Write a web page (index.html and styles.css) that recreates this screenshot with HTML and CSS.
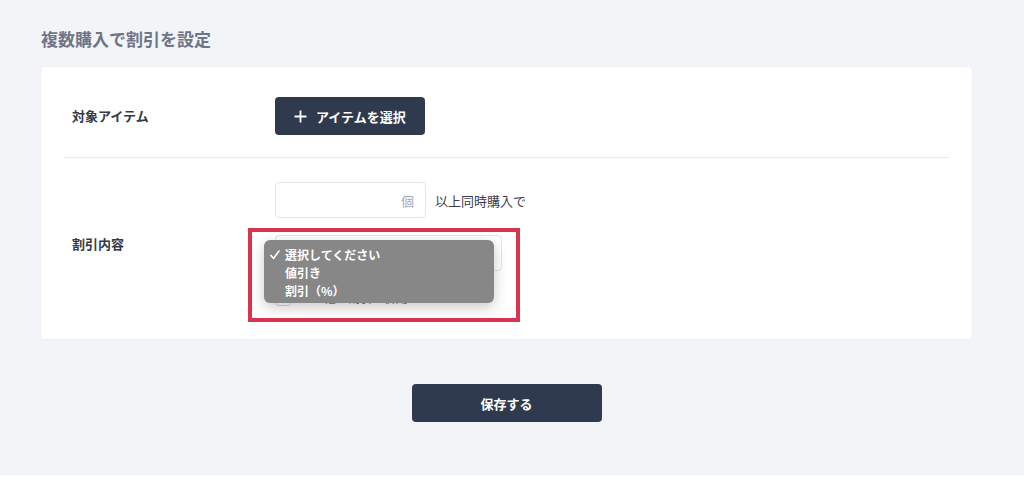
FILE: index.html
```html
<!DOCTYPE html>
<html lang="ja">
<head>
<meta charset="utf-8">
<title>複数購入で割引を設定</title>
<link rel="stylesheet" href="styles.css">
</head>
<body>
<div class="page">
  <h1 class="title">複数購入で割引を設定</h1>
  <div class="card">
    <div class="row row-items">
      <div class="label">対象アイテム</div>
      <div class="controls">
        <button class="btn btn-select" type="button">
          <svg class="plus" width="13" height="13" viewBox="0 0 13 13" aria-hidden="true"><path d="M6.5 0.5v12M0.5 6.5h12" stroke="#fff" stroke-width="1.8" fill="none"/></svg>
          <span>アイテムを選択</span>
        </button>
      </div>
    </div>
    <div class="divider"></div>
    <div class="row row-discount">
      <div class="label">割引内容</div>
      <div class="controls stack">
        <div class="qty-line">
          <div class="input qty"><span class="unit">個</span></div>
          <span class="qty-text">以上同時購入で</span>
        </div>
        <div class="input select"></div>
        <div class="check-line">
          <span class="checkbox"></span>
          <span class="check-text">他の割引と併用</span>
        </div>
      </div>
      <div class="highlight"></div>
      <div class="menu">
        <div class="menu-item checked"><svg class="tick" width="10" height="10" viewBox="0 0 10 10" aria-hidden="true"><path d="M1 5.4l2.6 3L9 1" stroke="#fff" stroke-width="1.6" fill="none" stroke-linecap="round" stroke-linejoin="round"/></svg>選択してください</div>
        <div class="menu-item">値引き</div>
        <div class="menu-item">割引（%）</div>
      </div>
    </div>
  </div>
  <div class="actions">
    <button class="btn btn-save" type="button">保存する</button>
  </div>
</div>
</body>
</html>
```

FILE: styles.css
```css
html, body {
  margin: 0;
  padding: 0;
  background: #ffffff;
}

body {
  font-family: "Noto Sans CJK JP", "Noto Sans", sans-serif;
  color: #333a48;
}

.page {
  background: #f3f4f8;
  min-height: 475px;
  box-sizing: border-box;
  padding: 26px 52px 0 41px;
}

.title {
  margin: 0 0 16px;
  font-size: 17px;
  line-height: 25px;
  font-weight: 700;
  color: #6e7587;
}

.card {
  background: #ffffff;
  border-radius: 4px;
  padding: 0 23px;
  box-shadow: 0 0 2px rgba(30, 40, 70, 0.06);
}

.row {
  display: flex;
  align-items: center;
  padding-left: 8px;
}

.row-items {
  padding-top: 30px;
  padding-bottom: 22px;
}

.label {
  width: 203px;
  flex: none;
  font-size: 13px;
  font-weight: 700;
  color: #333a48;
  line-height: 20px;
}

.controls {
  flex: 1;
}

.btn {
  font-family: "Noto Sans CJK JP", "Noto Sans", sans-serif;
  background: #2f3a4e;
  color: #ffffff;
  border: none;
  border-radius: 4px;
  font-size: 13px;
  font-weight: 700;
  cursor: pointer;
}

.btn-select {
  width: 150px;
  height: 38px;
  display: flex;
  align-items: center;
  padding: 0 0 0 19px;
  gap: 9px;
}

.plus {
  display: block;
}

.divider {
  height: 1px;
  background: #e8eaf0;
}

.row-discount {
  position: relative;
  padding-top: 24px;
  padding-bottom: 33px;
}

.stack {
  display: flex;
  flex-direction: column;
}

.qty-line {
  display: flex;
  align-items: center;
  gap: 9px;
}

.input {
  box-sizing: border-box;
  height: 36px;
  border: 1px solid #e2e5ec;
  border-radius: 4px;
  background: #ffffff;
}

.qty {
  width: 151px;
  display: flex;
  align-items: center;
  justify-content: flex-end;
  padding-right: 11px;
}

.unit {
  font-size: 13px;
  color: #a3a9b7;
}

.qty-text {
  font-size: 13px;
  color: #3a4050;
}

.select {
  width: 227px;
  margin-top: 17px;
}

.check-line {
  display: flex;
  align-items: center;
  gap: 14px;
  margin-top: 18px;
  height: 17px;
}

.checkbox {
  box-sizing: border-box;
  width: 17px;
  height: 17px;
  border: 1px solid #d5d9e1;
  border-radius: 4px;
}

.check-text {
  font-size: 12px;
  line-height: 17px;
  color: #6a7080;
  padding-left: 18px;
}

.highlight {
  position: absolute;
  left: 184px;
  top: 70px;
  width: 272px;
  height: 94px;
  box-sizing: border-box;
  border: 4px solid #d8344f;
}

.menu {
  position: absolute;
  left: 200px;
  top: 82px;
  width: 230px;
  height: 63px;
  box-sizing: border-box;
  padding: 6px 0 3px;
  background: #878787;
  border-radius: 6px;
  box-shadow: 0 4px 14px rgba(0, 0, 0, 0.22);
}

.menu-item {
  position: relative;
  height: 18px;
  line-height: 18px;
  padding-left: 21px;
  font-size: 12px;
  font-weight: 700;
  color: #ffffff;
}

.tick {
  position: absolute;
  left: 6px;
  top: 4px;
}

.actions {
  display: flex;
  justify-content: center;
  margin-top: 45px;
}

.btn-save {
  width: 190px;
  height: 38px;
}
```
